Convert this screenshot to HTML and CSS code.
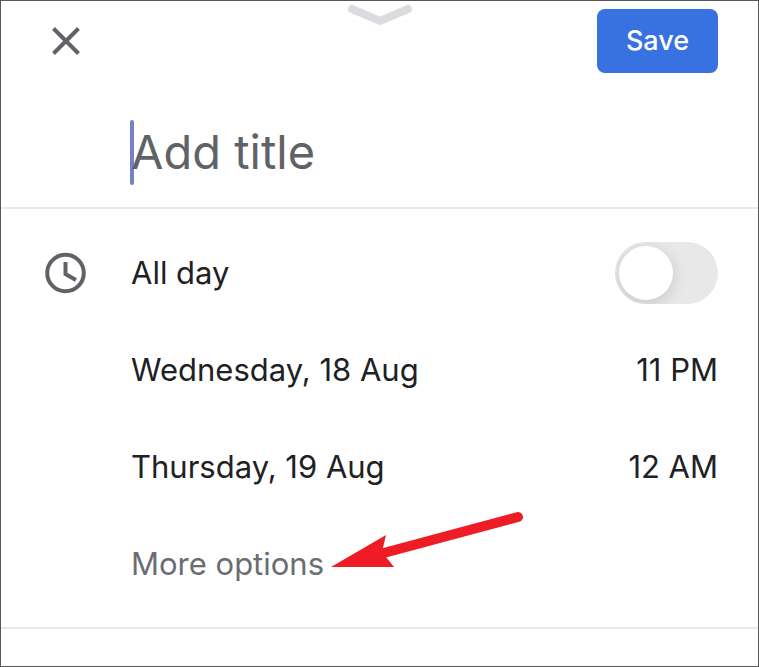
FILE: index.html
```html
<!DOCTYPE html>
<html lang="en">
<head>
<meta charset="utf-8">
<meta name="viewport" content="width=device-width, initial-scale=1">
<title>New event</title>
<link rel="stylesheet" href="styles.css">
</head>
<body>
<form class="sheet">
  <header class="header">
    <button class="close" type="button" aria-label="Close">
      <svg width="28" height="28" viewBox="0 0 28 28"><path d="M1.5 1.5 26.5 26.5M26.5 1.5 1.5 26.5"/></svg>
    </button>
    <svg class="grabber" width="66" height="22" viewBox="0 0 66 22" aria-hidden="true"><path d="M5 5 33 17 61 5"/></svg>
    <button class="save" type="button">Save</button>
  </header>
  <div class="title-row">
    <div class="title-field">
      <input class="title" type="text" placeholder="Add title" aria-label="Add title">
      <span class="caret"></span>
    </div>
  </div>
  <section class="details">
    <div class="row">
      <svg class="clock" width="42" height="42" viewBox="0 0 42 42" aria-hidden="true"><circle cx="20.5" cy="21" r="18.3"/><path d="M20.5 10V22L31 28"/></svg>
      <label class="text" for="all-day">All day</label>
      <input class="switch" id="all-day" type="checkbox" role="switch">
    </div>
    <div class="row">
      <button class="text" type="button">Wednesday, 18 Aug</button>
      <button class="time" type="button">11 PM</button>
    </div>
    <div class="row">
      <button class="text" type="button">Thursday, 19 Aug</button>
      <button class="time" type="button">12 AM</button>
    </div>
    <div class="row">
      <button class="text more" type="button">More options</button>
      <svg class="arrow" width="196" height="60" viewBox="0 0 196 60" aria-hidden="true"><path class="shaft" d="M50 44 188 7"/><path class="head" d="M1 57 56 25 52 42 64 57Z"/></svg>
    </div>
  </section>
</form>
</body>
</html>
```
FILE: styles.css
```css
* {
  box-sizing: border-box;
}

body {
  margin: 0;
  background: #fff;
  color: #202124;
  font-family: Inter, "Liberation Sans", sans-serif;
  font-size: 31px;
  line-height: 40px;
}

button,
input {
  margin: 0;
  padding: 0;
  border: 0;
  background: none;
  color: inherit;
  font: inherit;
}

svg {
  display: block;
  fill: none;
}

.sheet {
  min-height: 100vh;
  border: 1px solid #58585b;
}

.header {
  display: grid;
  grid-template-columns: 1fr auto 1fr;
  padding: 8px 40px 0;
}

.close {
  justify-self: start;
  align-self: center;
  padding: 0 11px;
  stroke: #5f6368;
  stroke-width: 4;
}

.grabber {
  margin-top: -5px;
  stroke: #dadce0;
  stroke-width: 8;
  stroke-linecap: round;
}

.save {
  justify-self: end;
  width: 121px;
  height: 64px;
  border-radius: 8px;
  background: #3871e0;
  color: #fff;
  font-size: 27px;
  font-weight: 500;
}

.title-row {
  padding: 47px 40px 22px 130px;
  border-bottom: 2px solid #e8e9eb;
}

.title-field {
  position: relative;
}

.title {
  display: block;
  width: 100%;
  height: 65px;
  padding-bottom: 2px;
  font-size: 47px;
}

.title::placeholder {
  color: #5f6368;
  opacity: 1;
}

.caret {
  position: absolute;
  top: 0;
  left: -1px;
  width: 4px;
  height: 65px;
  border-radius: 2px;
  background: #4956b0;
  opacity: 0.75;
}

.details {
  padding: 15px 40px;
  border-bottom: 2px solid #e8e9eb;
}

.row {
  position: relative;
  display: grid;
  grid-template-columns: 90px 1fr auto;
  align-items: center;
  height: 97px;
}

.text {
  grid-column: 2;
  justify-self: start;
}

.clock {
  margin-left: 4px;
  stroke: #5f6368;
  stroke-width: 4;
}

.more {
  color: #6a6d72;
}

.switch {
  appearance: none;
  width: 103px;
  height: 62px;
  padding: 4px;
  border-radius: 31px;
  background: #e8e8e8;
  overflow: hidden;
}

.switch::before {
  content: "";
  display: block;
  width: 54px;
  height: 54px;
  border-radius: 50%;
  background: #fff;
  box-shadow: 0 4px 16px rgba(0, 0, 0, 0.14);
}

.switch:checked::before {
  margin-left: auto;
}

.arrow {
  position: absolute;
  top: -5px;
  left: 289px;
}

.shaft {
  stroke: #ee1c25;
  stroke-width: 10;
  stroke-linecap: round;
}

.head {
  fill: #ee1c25;
}
```
